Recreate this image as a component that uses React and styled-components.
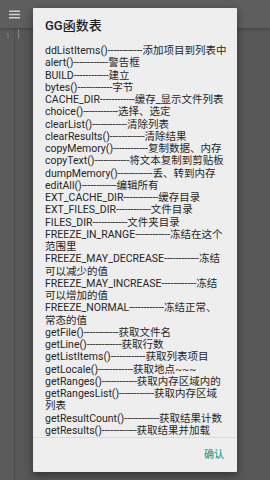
import React from 'react';
import styled, { createGlobalStyle } from 'styled-components';

const GlobalStyle = createGlobalStyle`
  html, body {
    margin: 0;
    padding: 0;
    background: #575757;
  }
  body {
    font-family: Roboto, "Noto Sans CJK SC", sans-serif;
  }
`;

const Screen = styled.div`
  position: relative;
  width: 270px;
  height: 480px;
  overflow: hidden;
  background: #575757;
  display: flex;
  flex-direction: column;
`;

const Toolbar = styled.div`
  height: 28px;
  flex: none;
  background: #5e5e5e;
  display: flex;
  align-items: center;
  padding-left: 9px;
  box-shadow: 0 1px 3px rgba(0, 0, 0, 0.25);
  z-index: 1;
`;

const Editor = styled.div`
  flex: 1;
  display: flex;
`;

const Gutter = styled.div`
  width: 15px;
  flex: none;
  border-right: 1px solid #4d4d4d;
  background: #5a5a5a;
  color: #8a8a8a;
  font-size: 8px;
  text-align: right;
  padding: 3px 4px 0 0;
  box-sizing: border-box;
`;

const Code = styled.div`
  flex: 1;
  padding: 1px 0 0 3px;
`;

const Caret = styled.div`
  width: 1px;
  height: 10px;
  background: #8a8a8a;
`;

const Scrim = styled.div`
  position: absolute;
  inset: 0;
  z-index: 2;
  display: flex;
  justify-content: center;
  align-items: flex-start;
  padding-top: 8px;
`;

const Dialog = styled.div`
  width: 204px;
  height: 464px;
  background: #eeeeee;
  border-radius: 1px;
  box-shadow: 0 3px 8px rgba(0, 0, 0, 0.45);
  display: flex;
  flex-direction: column;
  overflow: hidden;
`;

const Title = styled.div`
  padding: 10px 12px 0;
  height: 16px;
  line-height: 16px;
  font-size: 13px;
  font-weight: 500;
  color: #1f1f1f;
  flex: none;
`;

const Body = styled.div`
  margin-top: 11px;
  flex: 1;
  min-height: 0;
  overflow: hidden;
  padding: 0 12px;
  border-bottom: 1px solid #dcdcdc;
`;

const Line = styled.div`
  font-size: 10.5px;
  line-height: 12.26px;
  height: 12.26px;
  color: #262626;
  white-space: nowrap;
`;

const Footer = styled.div`
  height: 34px;
  flex: none;
  display: flex;
  align-items: center;
  justify-content: flex-end;
  padding-right: 13px;
`;

const Button = styled.button`
  border: none;
  background: none;
  padding: 0;
  font-family: Roboto, "Noto Sans CJK SC", sans-serif;
  font-size: 10px;
  font-weight: 500;
  line-height: 12px;
  color: #2aa394;
`;

const DASH = '------------';

const items = [
  ['ddListItems()', '添加项目到列表中'],
  ['alert()', '警告框'],
  ['BUILD', '建立'],
  ['bytes()', '字节'],
  ['CACHE_DIR', '缓存_显示文件列表'],
  ['choice()', '选择、选定'],
  ['clearList()', '清除列表'],
  ['clearResults()', '清除结果'],
  ['copyMemory()', '复制数据、内存'],
  ['copyText()', '将文本复制到剪贴板'],
  ['dumpMemory()', '丢、转到内存'],
  ['editAll()', '编辑所有'],
  ['EXT_CACHE_DIR', '缓存目录'],
  ['EXT_FILES_DIR', '文件目录'],
  ['FILES_DIR', '文件夹目录'],
  ['FREEZE_IN_RANGE', '冻结在这个', '范围里'],
  ['FREEZE_MAY_DECREASE', '冻结', '可以减少的值'],
  ['FREEZE_MAY_INCREASE', '冻结', '可以增加的值'],
  ['FREEZE_NORMAL', '冻结正常、', '常态的值'],
  ['getFile()', '获取文件名'],
  ['getLine()', '获取行数'],
  ['getListItems()', '获取列表项目'],
  ['getLocale()', '获取地点~~~'],
  ['getRanges()', '获取内存区域内的'],
  ['getRangesList()', '获取内存区域', '列表'],
  ['getResultCount()', '获取结果计数'],
  ['getResults()', '获取结果并加载'],
];

function Menu() {
  return (
    <svg width="11" height="9" viewBox="0 0 11 9">
      <rect x="0" y="0.5" width="11" height="1.5" fill="#d0d0d0" />
      <rect x="0" y="3.75" width="11" height="1.5" fill="#d0d0d0" />
      <rect x="0" y="7" width="11" height="1.5" fill="#d0d0d0" />
    </svg>
  );
}

export default function App() {
  return (
    <Screen>
      <GlobalStyle />
      <Toolbar>
        <Menu />
      </Toolbar>
      <Editor>
        <Gutter>1</Gutter>
        <Code>
          <Caret />
        </Code>
      </Editor>
      <Scrim>
        <Dialog>
          <Title>GG函数表</Title>
          <Body>
            {items.map(([name, desc, more]) => (
              <React.Fragment key={name}>
                <Line>{name + DASH + desc}</Line>
                {more && <Line>{more}</Line>}
              </React.Fragment>
            ))}
          </Body>
          <Footer>
            <Button>确认</Button>
          </Footer>
        </Dialog>
      </Scrim>
    </Screen>
  );
}
